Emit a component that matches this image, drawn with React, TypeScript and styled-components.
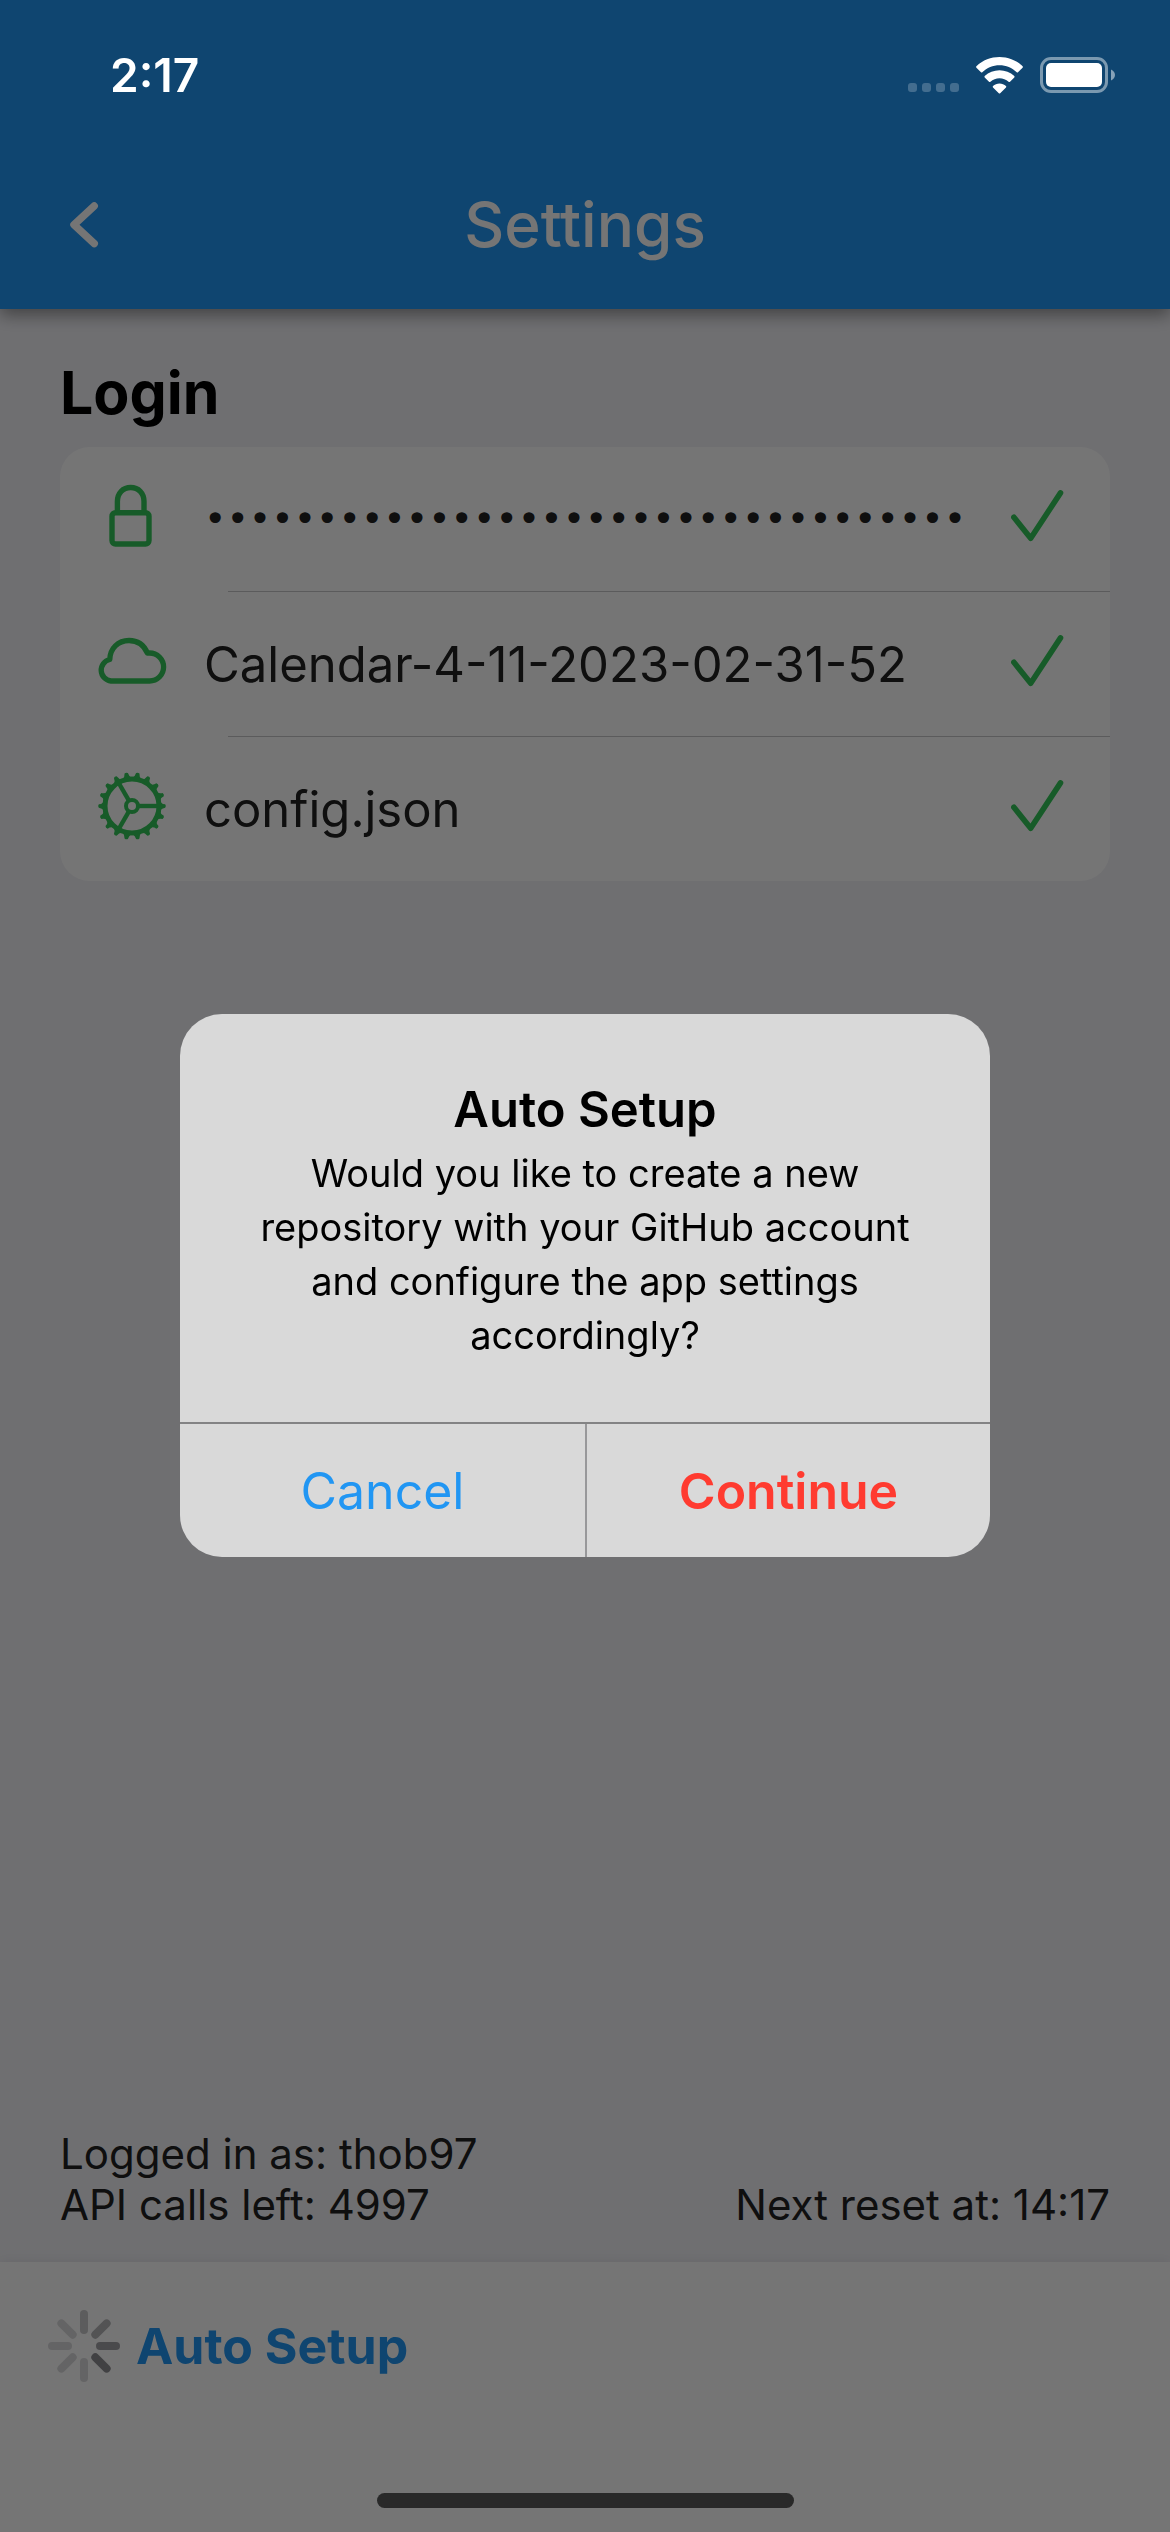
import React from "react";
import styled, { createGlobalStyle } from "styled-components";

const GlobalStyle = createGlobalStyle`
  *, *::before, *::after { box-sizing: border-box; }
  body {
    margin: 0;
    background: #f2f2f7;
    color: #212121;
    font-family: Inter, "Liberation Sans", sans-serif;
  }
  button, input { font: inherit; color: inherit; }
  svg { display: block; flex: none; }
`;

const Screen = styled.div`
  display: flex;
  flex-direction: column;
  min-height: 100vh;
`;

const Header = styled.header`
  position: relative;
  background: #2196f3;
  color: #fff;
  box-shadow: 0 6px 16px rgba(0, 0, 0, 0.4);
`;

/* System chrome stays bright above the modal barrier. */
const StatusBar = styled.div`
  position: relative;
  z-index: 3;
  display: flex;
  align-items: center;
  justify-content: space-between;
  height: 141px;
  padding: 8px 54px 0 110px;
`;

const Clock = styled.time`
  font-size: 46px;
  font-weight: 600;
  line-height: 54px;
`;

const StatusIcons = styled.div`
  display: flex;
  align-items: center;
  gap: 16px;
`;

const NavBar = styled.div`
  display: grid;
  grid-template-columns: 168px 1fr 168px;
  align-items: center;
  height: 168px;
`;

const IconButton = styled.button`
  display: flex;
  align-items: center;
  justify-content: center;
  height: 168px;
  padding: 0;
  border: 0;
  background: none;
`;

const Title = styled.h1`
  margin: 0;
  font-size: 62px;
  font-weight: 500;
  line-height: 72px;
  text-align: center;
`;

const Content = styled.main`
  display: flex;
  flex: 1;
  flex-direction: column;
  padding: 48px 60px 32px;
`;

const SectionTitle = styled.h2`
  margin: 0 0 18px;
  color: #000;
  font-size: 59px;
  font-weight: 700;
  line-height: 72px;
`;

const Card = styled.section`
  border-radius: 30px;
  background: #fff;
`;

const Row = styled.div`
  display: grid;
  grid-template-columns: 144px 1fr 144px;
  align-items: center;
  height: 144px;
`;

const Divider = styled.hr`
  height: 1px;
  margin: 0 0 0 168px;
  border: 0;
  background: #c6c6c8;
`;

const IconSlot = styled.label`
  display: flex;
  justify-content: center;
  padding-bottom: 6px;
  color: #34c759;
`;

const CheckSlot = styled.span`
  display: flex;
  justify-content: center;
  padding-bottom: 6px;
  color: #34c759;
`;

/* Inter's mask bullets are heavy and tight; DejaVu's are small and widely set. */
const Field = styled.input`
  width: 100%;
  min-width: 0;
  height: 72px;
  padding: 0;
  border: 0;
  outline: 0;
  background: none;
  font-size: 49px;

  &[type="password"] {
    font-family: "DejaVu Sans", sans-serif;
    font-size: 38px;
  }
`;

const AccountInfo = styled.div`
  display: flex;
  align-items: flex-end;
  justify-content: space-between;
  margin-top: auto;
  font-size: 42px;
  line-height: 51px;
`;

const InfoLine = styled.p`
  margin: 0;
`;

const BottomBar = styled.footer`
  background: #fff;
  box-shadow: 0 0 12px rgba(0, 0, 0, 0.08);
`;

const Toolbar = styled.div`
  display: flex;
  align-items: center;
  gap: 16px;
  height: 168px;
  padding: 0 48px;
`;

const SetupButton = styled.button`
  padding: 0;
  border: 0;
  background: none;
  color: #2196f3;
  font-size: 50px;
  font-weight: 700;
  line-height: 72px;
`;

const HomeArea = styled.div`
  display: flex;
  align-items: flex-end;
  justify-content: center;
  height: 102px;
  padding-bottom: 24px;
`;

const HomeIndicator = styled.div`
  position: relative;
  z-index: 3;
  width: 417px;
  height: 15px;
  border-radius: 8px;
  background: #292929;
`;

const Barrier = styled.div`
  position: fixed;
  inset: 0;
  z-index: 2;
  display: flex;
  align-items: center;
  justify-content: center;
  padding: 141px 0 102px;
  background: rgba(0, 0, 0, 0.54);
`;

const Dialog = styled.div`
  width: 810px;
  overflow: hidden;
  border-radius: 42px;
  background: #d9d9d9;
  color: #000;
  text-align: center;
`;

const DialogBody = styled.div`
  padding: 60px;
`;

const DialogTitle = styled.h2`
  margin: 0;
  font-size: 49px;
  font-weight: 600;
  line-height: 72px;
`;

const DialogText = styled.p`
  margin: 0;
  font-size: 38px;
  line-height: 54px;
`;

const DialogActions = styled.div`
  display: grid;
  grid-template-columns: 1fr 1fr;
  border-top: 2px solid #838384;
`;

const DialogButton = styled.button<{ $destructive?: boolean }>`
  height: 133px;
  padding: 0;
  border: 0;
  background: none;
  color: ${(p) => (p.$destructive ? "#ff3b30" : "#2196f3")};
  font-size: 50px;
  font-weight: ${(p) => (p.$destructive ? 600 : 400)};

  & + & {
    border-left: 2px solid #98989a;
  }
`;

const SignalIcon = () => (
  <svg width="51" height="36" viewBox="0 0 51 36" fill="#fff" fillOpacity="0.22">
    {[0, 14, 28, 42].map((x) => (
      <rect key={x} x={x} y="26" width="9" height="9" rx="3" />
    ))}
  </svg>
);

const WifiIcon = () => (
  <svg width="49" height="36" viewBox="0 -1 49 36" overflow="visible" fill="#fff">
    <path d="M24.5 7.2c6.5 0 12.6 2.5 17.2 7 .4.4 1 .4 1.3 0l4.6-4.5c.4-.4.4-1 0-1.400C41.200 2.200 33-.9 24.500-.9S7.800 2.200 1.400 8.300c-.4.4-.4 1 0 1.400L6 14.200c.4.400 1 .400 1.300 0 4.600-4.500 10.700-7 17.200-7z" />
    <path d="M24.500 20.300c3.400 0 6.600 1.200 9.100 3.500.4.400 1 .400 1.400 0l4.300-4.300c.4-.4.4-1 0-1.400-4-3.800-9.300-5.900-14.800-5.900s-10.800 2.100-14.800 5.900c-.4.400-.4 1 0 1.400l4.300 4.300c.4.400 1 .400 1.400 0 2.500-2.300 5.700-3.500 9.100-3.500z" />
    <path d="M31 28.100c.4.400.4 1 0 1.400l-5.800 5.700c-.4.400-1 .4-1.400 0L18 29.500c-.4-.4-.4-1 0-1.400 1.700-1.700 4.100-2.700 6.500-2.700s4.800 1 6.500 2.700z" />
  </svg>
);

const BatteryIcon = () => (
  <svg width="76" height="36" viewBox="0 0 76 36">
    <rect x="1.500" y="1.500" width="65" height="33" rx="9.500" fill="none" stroke="#fff" strokeOpacity="0.45" strokeWidth="3" />
    <rect x="6" y="6" width="56" height="24" rx="5" fill="#fff" />
    <path d="M71 12.500c2.400 1 4 3 4 5.500s-1.600 4.500-4 5.500z" fill="#fff" fillOpacity="0.5" />
  </svg>
);

const BackIcon = () => (
  <svg width="30" height="46" viewBox="0 0 30 46" fill="none" stroke="#fff" strokeWidth="7.500" strokeLinecap="round" strokeLinejoin="round">
    <path d="M25.200 4L5 22.800l20.200 18.800" />
  </svg>
);

const LockIcon = () => (
  <svg width="70" height="70" viewBox="0 0 70 70" fill="none" stroke="currentColor" strokeWidth="5.400">
    <rect x="15" y="31.700" width="37" height="31.300" rx="3.500" />
    <path d="M20.400 31V20.500C20.400 12 26 6.500 33.700 6.500S47 12 47 20.500V31" />
  </svg>
);

const CloudIcon = () => (
  <svg width="70" height="70" viewBox="0 0 70 70" fill="none" stroke="currentColor" strokeWidth="5.300" strokeLinejoin="round">
    <path d="M14 55A10.900 10.900 0 0 1 12.800 33.500C13 22.500 21 14.500 32 14.500C40.500 14.500 47 19 50.300 27L52.600 27A14 14 0 0 1 52.600 55z" />
  </svg>
);

const TEETH = Array.from({ length: 18 }, (_, i) => i * 20);

const GearIcon = () => (
  <svg width="70" height="70" viewBox="-35 -35 70 70" fill="none" stroke="currentColor">
    <circle r="27" strokeWidth="5" />
    <circle r="6" strokeWidth="4" />
    {[0, 120, 240].map((a) => (
      <path key={a} d="M7 0H26" strokeWidth="4.400" transform={`rotate(${a})`} />
    ))}
    {TEETH.map((a) => (
      <path key={a} d="M28-4.600Q30-2 33.200-1.700Q34.500 0 33.200 1.700Q30 2 28 4.600z" fill="currentColor" stroke="none" transform={`rotate(${a})`} />
    ))}
  </svg>
);

const CheckIcon = () => (
  <svg width="54" height="52" viewBox="0 0 54 52" fill="none" stroke="currentColor" strokeWidth="5.600" strokeLinecap="round" strokeLinejoin="round">
    <path d="M2.900 27.300L19.700 48.300L49.500 2.900" />
  </svg>
);

/* Spokes run clockwise from the top, each with its own step of the fade. */
const SPOKES = [72, 97, 122, 147, 47, 47, 47, 47];

const Spinner = () => (
  <svg width="72" height="72" viewBox="-36 -36 72 72" fill="#3c3c44" role="img" aria-label="Loading">
    {SPOKES.map((alpha, i) => (
      <rect key={i} x="-4" y="-36" width="8" height="24" rx="4" fillOpacity={alpha / 255} transform={`rotate(${i * 45})`} />
    ))}
  </svg>
);

const fields = [
  { id: "token", label: "Access token", type: "password", value: "0".repeat(40), Icon: LockIcon },
  { id: "repository", label: "Repository", type: "text", value: "Calendar-4-11-2023-02-31-52", Icon: CloudIcon },
  { id: "config", label: "Config file", type: "text", value: "config.json", Icon: GearIcon },
];

export default function App() {
  return (
    <Screen>
      <GlobalStyle />
      <Header>
        <StatusBar>
          <Clock>2:17</Clock>
          <StatusIcons>
            <SignalIcon />
            <WifiIcon />
            <BatteryIcon />
          </StatusIcons>
        </StatusBar>
        <NavBar>
          <IconButton type="button" aria-label="Back">
            <BackIcon />
          </IconButton>
          <Title>Settings</Title>
        </NavBar>
      </Header>

      <Content>
        <SectionTitle>Login</SectionTitle>
        <Card>
          {fields.map(({ id, label, type, value, Icon }, i) => (
            <React.Fragment key={id}>
              {i > 0 && <Divider />}
              <Row>
                <IconSlot htmlFor={id} aria-label={label}>
                  <Icon />
                </IconSlot>
                <Field id={id} type={type} defaultValue={value} aria-label={label} />
                <CheckSlot>
                  <CheckIcon />
                </CheckSlot>
              </Row>
            </React.Fragment>
          ))}
        </Card>
        <AccountInfo>
          <div>
            <InfoLine>Logged in as: thob97</InfoLine>
            <InfoLine>API calls left: 4997</InfoLine>
          </div>
          <InfoLine>Next reset at: 14:17</InfoLine>
        </AccountInfo>
      </Content>

      <BottomBar>
        <Toolbar>
          <Spinner />
          <SetupButton type="button">Auto Setup</SetupButton>
        </Toolbar>
        <HomeArea>
          <HomeIndicator />
        </HomeArea>
      </BottomBar>

      <Barrier>
        <Dialog role="alertdialog" aria-modal="true" aria-labelledby="setup-title" aria-describedby="setup-text">
          <DialogBody>
            <DialogTitle id="setup-title">Auto Setup</DialogTitle>
            <DialogText id="setup-text">
              Would you like to create a new repository with your GitHub account and configure the app settings accordingly?
            </DialogText>
          </DialogBody>
          <DialogActions>
            <DialogButton type="button">Cancel</DialogButton>
            <DialogButton type="button" $destructive>
              Continue
            </DialogButton>
          </DialogActions>
        </Dialog>
      </Barrier>
    </Screen>
  );
}
